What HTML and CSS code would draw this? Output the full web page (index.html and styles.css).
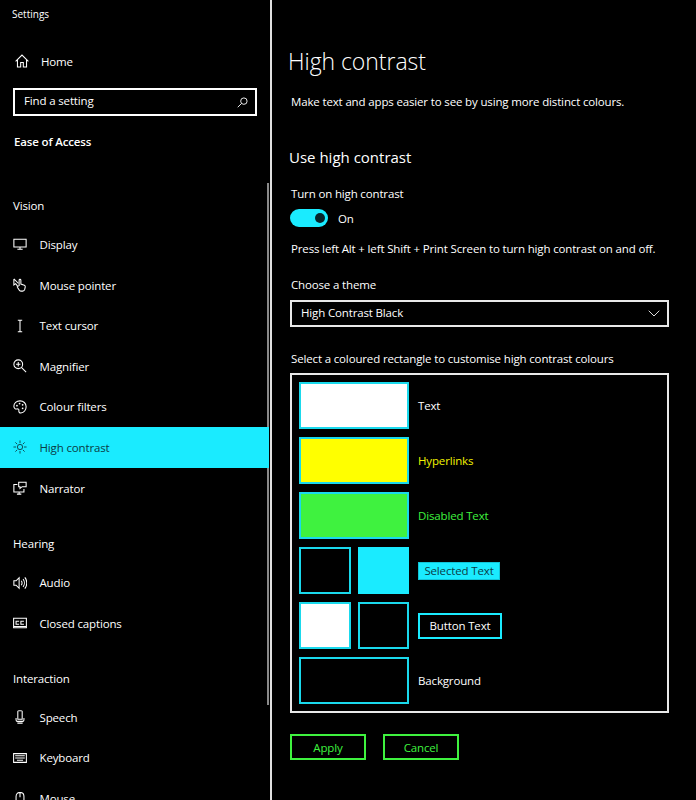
FILE: index.html
```html
<!DOCTYPE html>
<html lang="en">
<head>
  <meta charset="UTF-8" />
  <title>Settings</title>
  <link rel="stylesheet" href="styles.css">
</head>
<body>
  <div class="window">
    <aside class="side">
      <div class="app-title">Settings</div>

      <a class="home">
        <svg class="ico" viewBox="0 0 16 16"><path d="M.7 8.300 8 1.200l7.300 7.100M2.800 6.500v8.300h3.700V9.800h3v5h3.700V6.500"/></svg>
        <span>Home</span>
      </a>

      <div class="search">
        <span>Find a setting</span>
        <svg class="search-ico" viewBox="0 0 12 12"><circle cx="7.500" cy="4.500" r="3.500"/><path d="M5 7 .8 11.200"/></svg>
      </div>

      <div class="crumb">Ease of Access</div>

      <div class="group">Vision</div>
      <a class="item">
        <svg class="ico" viewBox="0 0 16 16"><path d="M1 2.500h14v9H1zM5 14h6M8 11.500V14"/></svg>
        <span>Display</span>
      </a>
      <a class="item">
        <svg class="ico" viewBox="0 0 16 16"><path d="M1 1v7l2-1.500L5 9M1 1l5 5M7 2.500V9M7 2.500c0-1.300 2-1.300 2 0V7l4 1.200c1 .4 1.200 1 1 2L13.400 13c-.3 1.200-1 2-2.400 2H9.500c-1 0-1.700-.4-2.300-1.200L5 10.500c-.5-1 .8-1.800 1.500-1"/></svg>
        <span>Mouse pointer</span>
      </a>
      <a class="item">
        <svg class="ico" viewBox="0 0 16 16"><path d="M5.500 1.500h5M5.500 14.500h5M8 1.500v13"/></svg>
        <span>Text cursor</span>
      </a>
      <a class="item">
        <svg class="ico" viewBox="0 0 16 16"><circle cx="6" cy="6" r="5"/><path d="M9.600 9.600 15 15M3.500 6h5M6 3.500v5"/></svg>
        <span>Magnifier</span>
      </a>
      <a class="item">
        <svg class="ico" viewBox="0 0 16 16"><path d="M8 1C4 1 1 3.800 1 7.200c0 2.600 2 3.300 3.500 3 1.500-.2 2.500.3 2.200 1.800-.3 1.700.7 3 2.300 2.900 3.500-.3 6-3.500 6-7.200C15 3.700 12 1 8 1z"/><circle class="dot" cx="4.500" cy="6.500" r="1"/><circle class="dot" cx="7.500" cy="4" r="1"/><circle class="dot" cx="11" cy="5.500" r="1"/><circle class="dot" cx="11" cy="9.500" r="1"/></svg>
        <span>Colour filters</span>
      </a>
      <a class="item item-on">
        <svg class="ico" viewBox="0 0 16 16"><circle cx="8" cy="8" r="3"/><path d="M8 .5v3M8 12.500v3M.5 8h3M12.500 8h3M2.700 2.700l2.100 2.100M11.200 11.200l2.100 2.100M13.300 2.700l-2.100 2.100M4.800 11.200l-2.100 2.100"/></svg>
        <span>High contrast</span>
      </a>
      <a class="item">
        <svg class="ico" viewBox="0 0 16 16"><path d="M5 4H1v8.500h11.500V9M4.500 15h5M7 12.500V15M6.500 1.500h8.500v5h-4.500L8 8.500v-2H6.500z"/></svg>
        <span>Narrator</span>
      </a>

      <div class="group group-hearing">Hearing</div>
      <a class="item">
        <svg class="ico" viewBox="0 0 16 16"><path d="M1 5.500v5h2.500L7 14V2L3.500 5.500zM9.500 5.500c1 1.500 1 3.500 0 5M11.500 3.500c2 2.500 2 6.500 0 9M13.500 1.500c3 3.500 3 9.500 0 13"/></svg>
        <span>Audio</span>
      </a>
      <a class="item">
        <svg class="ico" viewBox="0 0 16 16"><path d="M.7 2.500h14.600v11H.7zM7 6H3.500v3.500H7M12.500 6H9v3.500h3.500M1 12h14"/></svg>
        <span>Closed captions</span>
      </a>

      <div class="group group-interaction">Interaction</div>
      <a class="item">
        <svg class="ico" viewBox="0 0 16 16"><path d="M5.500 1.500c0-1 5-1 5 0v9h-5zM3.500 9v2.500c0 1 .8 1.500 1.500 1.500h6c.7 0 1.500-.5 1.500-1.500V9M5 15h6"/></svg>
        <span>Speech</span>
      </a>
      <a class="item">
        <svg class="ico" viewBox="0 0 16 16"><path d="M.7 3h14.600v10H.7zM2.500 5.500h11M2.500 8h11M4.500 10.500h7"/></svg>
        <span>Keyboard</span>
      </a>
      <a class="item">
        <svg class="ico" viewBox="0 0 16 16"><path d="M3.500 5c0-6 9-6 9 0v6c0 6-9 6-9 0zM8 1v5"/></svg>
        <span>Mouse</span>
      </a>

      <div class="scroll-thumb"></div>
    </aside>

    <main class="content">
      <h1>High contrast</h1>
      <p class="intro">Make text and apps easier to see by using more distinct colours.</p>

      <h2>Use high contrast</h2>
      <div class="field-label">Turn on high contrast</div>
      <div class="toggle-row">
        <span class="toggle"><span class="knob"></span></span>
        <span>On</span>
      </div>
      <p class="hint">Press left Alt + left Shift + Print Screen to turn high contrast on and off.</p>

      <div class="field-label theme-label">Choose a theme</div>
      <div class="select">
        <span>High Contrast Black</span>
        <svg class="chev" viewBox="0 0 12 7"><path d="M.7.7 6 6 11.300.7"/></svg>
      </div>

      <p class="pick-label">Select a coloured rectangle to customise high contrast colours</p>
      <div class="palette">
        <div class="row">
          <div class="swatches"><div class="swatch white"></div></div>
          <span>Text</span>
        </div>
        <div class="row">
          <div class="swatches"><div class="swatch yellow"></div></div>
          <span class="txt-yellow">Hyperlinks</span>
        </div>
        <div class="row">
          <div class="swatches"><div class="swatch green"></div></div>
          <span class="txt-green">Disabled Text</span>
        </div>
        <div class="row">
          <div class="swatches"><div class="swatch"></div><div class="swatch cyan"></div></div>
          <span class="chip-selected">Selected Text</span>
        </div>
        <div class="row">
          <div class="swatches"><div class="swatch white"></div><div class="swatch"></div></div>
          <span class="chip-button">Button Text</span>
        </div>
        <div class="row">
          <div class="swatches"><div class="swatch"></div></div>
          <span>Background</span>
        </div>
      </div>

      <div class="actions">
        <button type="button">Apply</button>
        <button type="button">Cancel</button>
      </div>
    </main>
  </div>
</body>
</html>
```

FILE: styles.css
```css
html, body {
  margin: 0;
  height: 100%;
  background: #000;
}
body {
  font-family: "Open Sans", "Noto Sans", sans-serif;
  font-size: 11.500px;
  letter-spacing: -0.15px;
  color: #fff;
  overflow: hidden;
}
.window {
  display: flex;
  height: 800px;
}

/* left column */
.side {
  position: relative;
  box-sizing: border-box;
  width: 272px;
  height: 800px;
  flex: none;
  overflow: hidden;
  border-right: 2px solid #e0e0e0;
}
.app-title {
  font-size: 10px;
  letter-spacing: 0;
  line-height: 14px;
  padding: 7px 0 0 12px;
}
.home {
  display: flex;
  align-items: center;
  gap: 12px;
  height: 40px;
  margin-top: 20px;
  padding-left: 15px;
}
.ico {
  width: 14px;
  height: 14px;
  flex: none;
  fill: none;
  stroke: #fff;
  stroke-width: 1.200;
}
.dot {
  fill: #fff;
  stroke: none;
}
.search {
  display: flex;
  align-items: center;
  justify-content: space-between;
  box-sizing: border-box;
  width: 244px;
  height: 28px;
  margin: 7px 0 0 13px;
  padding: 0 7px 3px 9px;
  border: 2px solid #fff;
}
.search-ico {
  width: 11px;
  height: 11px;
  margin-top: 3px;
  fill: none;
  stroke: #fff;
}
.crumb {
  font-weight: 600;
  line-height: 16px;
  margin: 18px 0 0 14px;
}
.group {
  line-height: 16px;
  margin: 48px 0 10.200px 13px;
}
.group-hearing {
  margin-top: 27.800px;
}
.group-interaction {
  margin-top: 27.500px;
  margin-bottom: 10px;
}
.item {
  display: flex;
  align-items: center;
  gap: 12.500px;
  box-sizing: border-box;
  width: 269px;
  height: 40.600px;
  padding-left: 13px;
}
.item-on {
  position: relative;
  z-index: 1;
  background: #1aebff;
  color: #0b3b44;
}
.item-on .ico {
  stroke: #0b3b44;
  stroke-width: 1;
}
.scroll-thumb {
  position: absolute;
  left: 267px;
  top: 183px;
  width: 2px;
  height: 522px;
  background: #8a8a8a;
}

/* right column */
.content {
  flex: 1;
  padding-left: 19px;
}
h1 {
  font-size: 23px;
  font-weight: 300;
  letter-spacing: -0.05px;
  line-height: 30px;
  margin: 46px 0 0 -3px;
}
.intro {
  line-height: 16px;
  margin: 18px 0 0;
}
h2 {
  font-size: 15px;
  font-weight: 400;
  letter-spacing: 0;
  line-height: 20px;
  margin: 37px 0 0 -2px;
}
.field-label {
  line-height: 16px;
  margin-top: 19px;
}
.toggle-row {
  display: flex;
  align-items: center;
  gap: 10px;
  height: 18px;
  margin-top: 7px;
}
.toggle {
  display: flex;
  align-items: center;
  justify-content: flex-end;
  box-sizing: border-box;
  width: 38px;
  height: 18px;
  margin-left: -1px;
  padding-right: 3px;
  border-radius: 9px;
  background: #1aebff;
}
.knob {
  width: 10px;
  height: 10px;
  border-radius: 50%;
  background: #06242b;
}
.hint {
  line-height: 16px;
  margin: 14px 0 0;
}
.theme-label {
  margin-top: 20px;
}
.select {
  display: flex;
  align-items: center;
  justify-content: space-between;
  box-sizing: border-box;
  width: 379px;
  height: 27px;
  margin: 7px 0 0 -1px;
  padding: 0 7px 2px 9px;
  border: 2px solid #e8e8e8;
}
.chev {
  width: 12px;
  height: 7px;
  margin-top: 2px;
  fill: none;
  stroke: #ddd;
}
.pick-label {
  line-height: 16px;
  margin: 24px 0 0;
}
.palette {
  display: grid;
  grid-auto-rows: 47px;
  row-gap: 8px;
  box-sizing: border-box;
  width: 379px;
  height: 340px;
  margin: 6px 0 0 -1px;
  padding: 7px;
  border: 2px solid #e8e8e8;
}
.row {
  display: flex;
  align-items: center;
  gap: 9px;
}
.swatches {
  display: flex;
  gap: 7px;
  width: 110px;
  height: 47px;
  flex: none;
}
.swatch {
  flex: 1;
  box-sizing: border-box;
  border: 2px solid #1ad9ec;
}
.white { background: #fff; }
.yellow { background: #ff0; }
.green { background: #3ff23f; }
.cyan { background: #1aebff; border-color: #1aebff; }
.txt-yellow { color: #f2f200; }
.txt-green { color: #3ff23f; }
.chip-selected {
  box-sizing: border-box;
  width: 82px;
  height: 18px;
  line-height: 16px;
  text-align: center;
  background: #1aebff;
  color: #0b3b44;
  border: 1px solid #12c4d6;
}
.chip-button {
  box-sizing: border-box;
  width: 84px;
  height: 26px;
  line-height: 22px;
  text-align: center;
  border: 2px solid #1aebff;
}
.actions {
  display: flex;
  gap: 17px;
  margin: 21px 0 0 -1px;
}
.actions button {
  box-sizing: border-box;
  width: 76px;
  height: 26px;
  padding: 0;
  font: inherit;
  letter-spacing: inherit;
  color: #3ff23f;
  background: #000;
  border: 2px solid #3ff23f;
}
```
